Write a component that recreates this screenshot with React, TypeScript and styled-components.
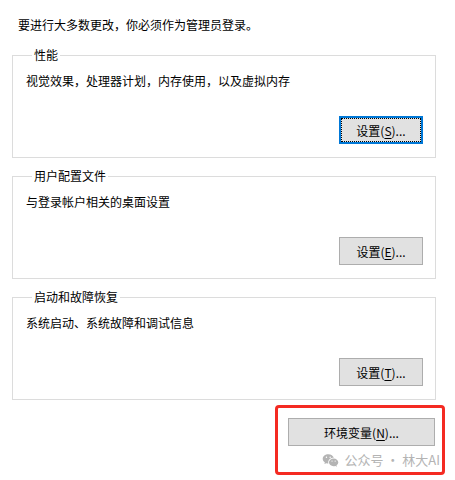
import { FC } from "react";
import styled, { createGlobalStyle } from "styled-components";
import { RiWechatFill } from "react-icons/ri";

const GlobalStyle = createGlobalStyle`
  html, body {
    margin: 0;
    padding: 0;
    background: #ffffff;
  }
  body {
    font-family: "Noto Sans CJK SC", "Noto Sans", sans-serif;
    font-size: 12px;
    color: #000000;
  }
`;

const Page = styled.div`
  width: 455px;
  height: 480px;
  box-sizing: border-box;
  padding: 17px 19px 0 12px;
  display: flex;
  flex-direction: column;
`;

const Intro = styled.div`
  line-height: 16px;
  padding-left: 6px;
  margin-bottom: 14px;
`;

const Group = styled.fieldset`
  margin: 0 0 10px 0;
  padding: 10px 12px 13px 12px;
  border: 1px solid #dcdcdc;
  min-width: 0;
  display: flex;
  flex-direction: column;
`;

const Legend = styled.legend`
  padding: 0 2px;
  margin-left: 7px;
  line-height: 16px;
`;

const Description = styled.div`
  line-height: 16px;
  padding-left: 1px;
`;

const ButtonRow = styled.div`
  display: flex;
  justify-content: flex-end;
  margin-top: 27px;
`;

const WinButton = styled.button<{ $focused?: boolean; $width?: number }>`
  width: ${(p) => p.$width ?? 84}px;
  height: 28px;
  box-sizing: border-box;
  margin: 0;
  padding: 0;
  font-family: inherit;
  font-size: 12px;
  color: #000000;
  background: #e1e1e1;
  border: ${(p) => (p.$focused ? "2px solid #0078d7" : "1px solid #adadad")};
  outline: ${(p) => (p.$focused ? "1px dotted #000000" : "none")};
  outline-offset: -3px;
  border-radius: 0;
  display: flex;
  align-items: center;
  justify-content: center;

  u {
    text-underline-offset: 2px;
  }
`;

const Footer = styled.div`
  display: flex;
  justify-content: flex-end;
  margin-top: -5px;
  margin-right: -9px;
`;

const Highlight = styled.div`
  width: 170px;
  height: 70px;
  box-sizing: border-box;
  border: 3px solid #f42a22;
  border-radius: 4px;
  padding: 10px 7px 0 10px;
  display: flex;
  flex-direction: column;
  align-items: flex-end;
`;

const Watermark = styled.div`
  display: flex;
  align-items: center;
  gap: 5px;
  margin-top: 5px;
  margin-right: -5px;
  font-size: 13px;
  line-height: 18px;
  color: #b4b4b4;
  white-space: nowrap;
`;

type Section = {
  title: string;
  text: string;
  key: string;
  focused?: boolean;
};

const sections: Section[] = [
  { title: "性能", text: "视觉效果，处理器计划，内存使用，以及虚拟内存", key: "S", focused: true },
  { title: "用户配置文件", text: "与登录帐户相关的桌面设置", key: "E" },
  { title: "启动和故障恢复", text: "系统启动、系统故障和调试信息", key: "T" },
];

const App: FC = () => {
  return (
    <>
      <GlobalStyle />
      <Page>
        <Intro>要进行大多数更改，你必须作为管理员登录。</Intro>
        {sections.map((s) => (
          <Group key={s.key}>
            <Legend>{s.title}</Legend>
            <Description>{s.text}</Description>
            <ButtonRow>
              <WinButton $focused={s.focused}>
                设置(<u>{s.key}</u>)...
              </WinButton>
            </ButtonRow>
          </Group>
        ))}
        <Footer>
          <Highlight>
            <WinButton $width={147}>
              环境变量(<u>N</u>)...
            </WinButton>
            <Watermark>
              <RiWechatFill size={17} />
              <span>公众号 · 林大AI</span>
            </Watermark>
          </Highlight>
        </Footer>
      </Page>
    </>
  );
};

export default App;
